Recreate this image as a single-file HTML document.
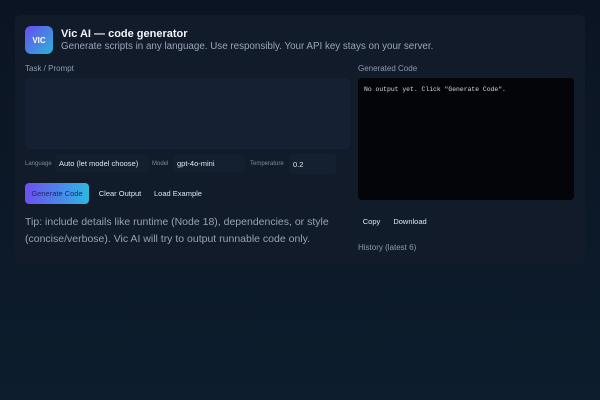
<!DOCTYPE html>
<html><head><meta charset="utf-8"><style>
*{box-sizing:border-box;margin:0;padding:0}
html,body{width:600px;height:400px;overflow:hidden}
body{background:linear-gradient(#0b1422,#0d1d2d);font-family:"Liberation Sans",sans-serif;color:#e6ecf3;position:relative}
.card{position:absolute;left:15px;top:15px;width:570px;height:249px;background:#111b2a;border-radius:6px}
.abs{position:absolute}
.logo{left:10px;top:11px;width:28px;height:28px;border-radius:6px;background:linear-gradient(135deg,#6a4cf0,#2bb3d9);color:#fff;font-size:8px;font-weight:bold;display:flex;align-items:center;justify-content:center}
.title{left:46px;top:13px;font-size:11px;font-weight:bold;color:#f2f5f9}
.sub{left:46px;top:26px;font-size:9.8px;color:#98a6b8;white-space:nowrap}
.lbl{font-size:8px;color:#8d9bad}
.ta{left:10px;top:63px;width:325px;height:71px;background:#152132;border-radius:4px}
.sel{background:#142030;border-radius:3px;font-size:7.5px;color:#dfe6ee;padding-left:4px;display:flex;align-items:center}
.tiny{font-size:6px;color:#7d8b9c}
.btn{font-size:7.5px;color:#dfe6ee;display:flex;align-items:center;justify-content:center;border-radius:4px;background:#111c2b}
.gen{background:linear-gradient(90deg,#6e4ff0,#2cb8e3);color:#1d2a6a}
.tip{left:10px;top:199px;font-size:10.5px;line-height:17px;color:#95a3b4;width:330px}
.code{left:343px;top:63px;width:216px;height:122px;background:#030509;border-radius:4px;font-family:"Liberation Mono",monospace;font-size:6.4px;color:#d5dbe2;padding:8px 6px}
</style></head><body>
<div class="card">
<div class="abs logo">VIC</div>
<div class="abs title">Vic AI — code generator</div>
<div class="abs sub">Generate scripts in any language. Use responsibly. Your API key stays on your server.</div>
<div class="abs lbl" style="left:10px;top:49px">Task / Prompt</div>
<div class="abs ta"></div>
<div class="abs tiny" style="left:10px;top:146px">Language</div>
<div class="abs sel" style="left:40px;top:140px;width:94px;height:17px">Auto (let model choose)</div>
<div class="abs tiny" style="left:137px;top:146px">Model</div>
<div class="abs sel" style="left:158px;top:140px;width:72px;height:17px">gpt-4o-mini</div>
<div class="abs tiny" style="left:235px;top:146px">Temperature</div>
<div class="abs sel" style="left:274px;top:139px;width:47px;height:20px">0.2</div>
<div class="abs btn gen" style="left:10px;top:168px;width:64px;height:21px">Generate Code</div>
<div class="abs btn" style="left:79px;top:168px;width:52px;height:21px">Clear Output</div>
<div class="abs btn" style="left:135px;top:168px;width:56px;height:21px">Load Example</div>
<div class="abs tip">Tip: include details like runtime (Node 18), dependencies, or style (concise/verbose). Vic AI will try to output runnable code only.</div>
<div class="abs lbl" style="left:343px;top:49px">Generated Code</div>
<div class="abs code">No output yet. Click "Generate Code".</div>
<div class="abs btn" style="left:343px;top:197px;width:27px;height:19px">Copy</div>
<div class="abs btn" style="left:373px;top:197px;width:44px;height:19px">Download</div>
<div class="abs lbl" style="left:343px;top:228px">History (latest 6)</div>
</div>
</body></html>
